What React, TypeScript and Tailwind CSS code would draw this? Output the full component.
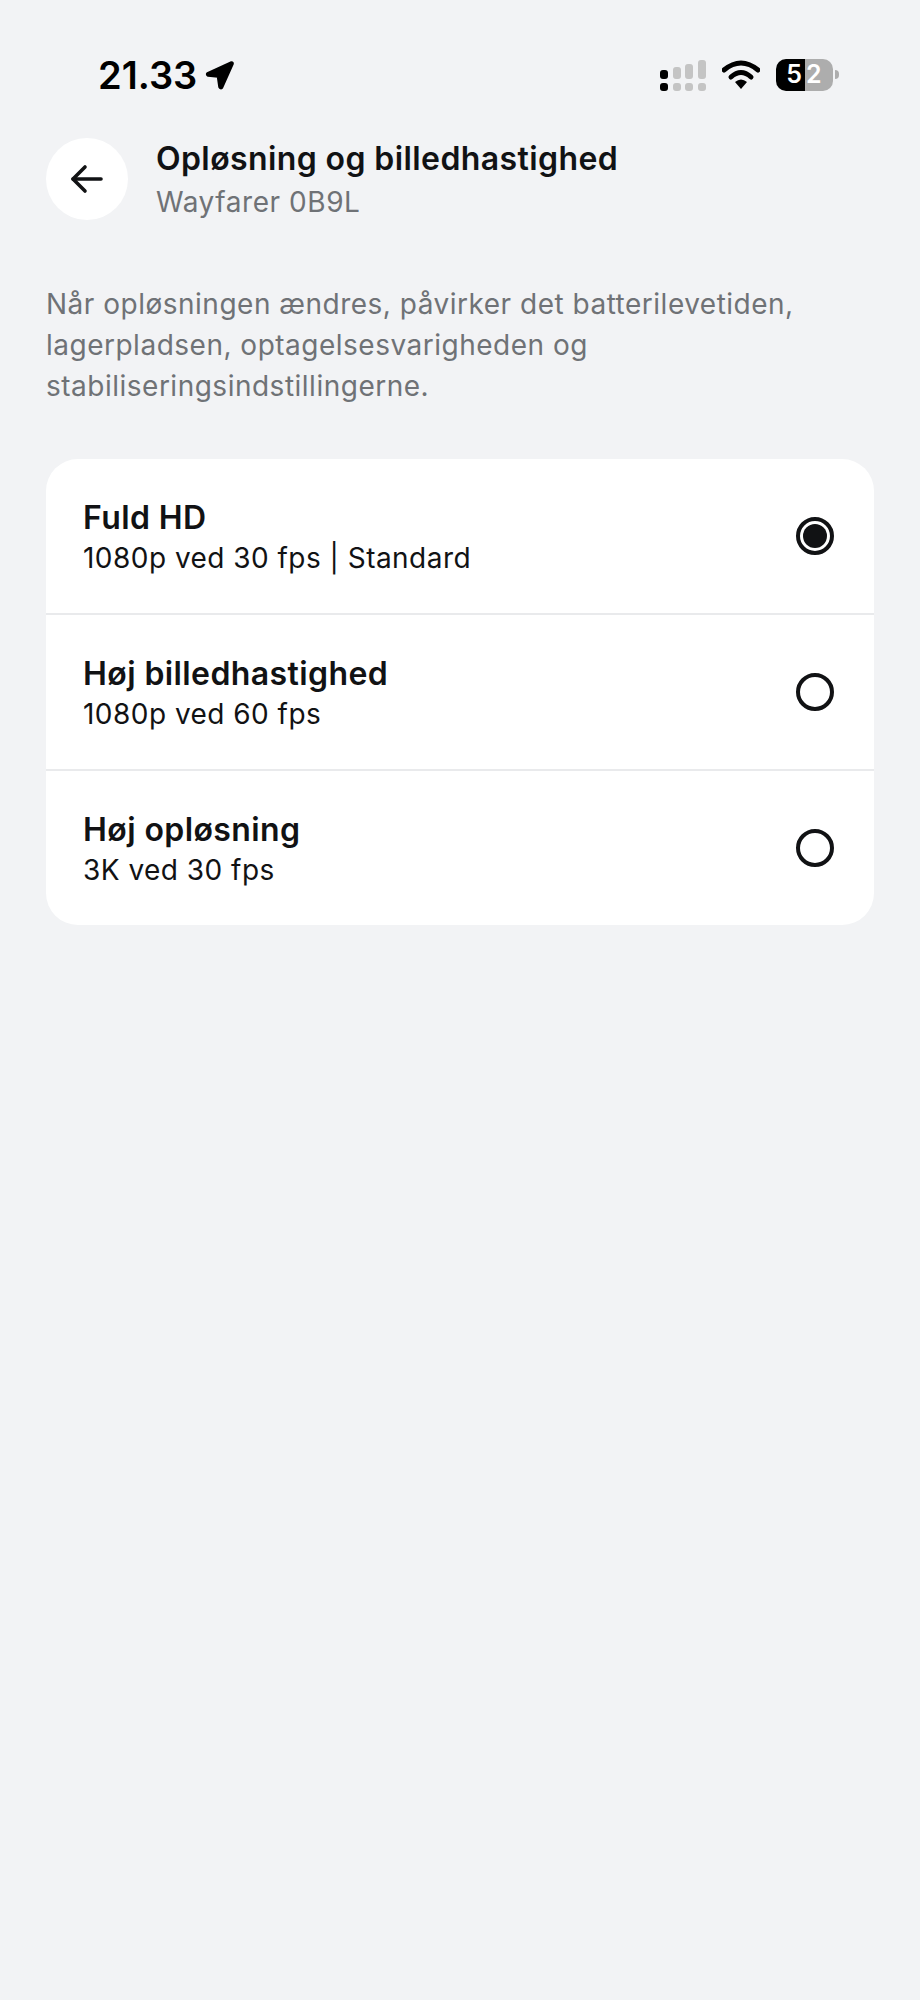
const options = [
  { title: "Fuld HD", sub: "1080p ved 30 fps | Standard", selected: true },
  { title: "Høj billedhastighed", sub: "1080p ved 60 fps", selected: false },
  { title: "Høj opløsning", sub: "3K ved 30 fps", selected: false },
];

function StatusBar() {
  return (
    <div className="flex h-[135px] items-start justify-between pl-[98px] pr-[81px] pt-[52px]">
      <div className="flex items-center gap-[8px]">
        <span className="text-[38px] font-semibold leading-[46px] text-black">21.33</span>
        <svg width="30" height="31" viewBox="0 0 30 31" className="mt-[1px]">
          <path d="M2.5 13.5 L26.5 2.5 Q28 2.5 27.5 4 L17 27.5 Q15.5 29 14.5 27 L13 16.5 L3 15.5 Q1.5 14.5 2.5 13.5 Z" fill="#000" stroke="#000" strokeWidth="2.5" strokeLinejoin="round" />
        </svg>
      </div>
      <div className="mt-[5px] flex items-center gap-[16px]">
        <svg width="46" height="32" viewBox="0 0 46 32" className="mt-[3px]">
          <rect x="0" y="10" width="8" height="9" rx="3" fill="#000" />
          <rect x="0" y="23" width="8" height="8" rx="3" fill="#000" />
          <rect x="13" y="7" width="8" height="12" rx="3" fill="#c4c4c4" />
          <rect x="13" y="23" width="8" height="8" rx="3" fill="#c4c4c4" />
          <rect x="25" y="4" width="8" height="15" rx="3" fill="#c4c4c4" />
          <rect x="25" y="23" width="8" height="8" rx="3" fill="#c4c4c4" />
          <rect x="38" y="0" width="8" height="19" rx="3" fill="#c4c4c4" />
          <rect x="38" y="23" width="8" height="8" rx="3" fill="#c4c4c4" />
        </svg>
        <svg width="38" height="30" viewBox="0 0 38 30">
          <path d="M2 10 Q19 -4 36 10" fill="none" stroke="#000" strokeWidth="5" strokeLinecap="round" />
          <path d="M9 17 Q19 8 29 17" fill="none" stroke="#000" strokeWidth="5" strokeLinecap="round" />
          <path d="M13 22 Q19 17 25 22 L19 29 Z" fill="#000" />
        </svg>
        <div className="flex items-center gap-[2px]">
          <div className="flex h-[32px] w-[57px] overflow-hidden rounded-[10px]">
            <div className="flex w-[29px] items-center justify-end bg-black pr-[3px] text-[25px] font-semibold leading-none text-white">5</div>
            <div className="flex flex-1 items-center bg-[#adadad] pl-[1px] text-[25px] font-semibold leading-none text-white">2</div>
          </div>
          <div className="h-[9px] w-[4px] rounded-r-full bg-[#adadad]" />
        </div>
      </div>
    </div>
  );
}

function Radio({ selected }: { selected: boolean }) {
  return (
    <div className="flex h-[38px] w-[38px] items-center justify-center rounded-full border-[4px] border-[#111214]">
      {selected && <div className="h-[24px] w-[24px] rounded-full bg-[#111214]" />}
    </div>
  );
}

export default function App() {
  return (
    <div className="h-[2000px] w-[920px] bg-[#f2f3f5] font-['Inter',sans-serif]">
      <StatusBar />
      <div className="flex items-center gap-[28px] px-[46px]">
        <div className="flex h-[82px] w-[82px] items-center justify-center rounded-full bg-white">
          <svg width="36" height="36" viewBox="0 0 36 36" fill="none" stroke="#111214" strokeWidth="3.6" strokeLinecap="round" strokeLinejoin="round">
            <path d="M4 18 H32" />
            <path d="M16 6 L4 18 L16 30" />
          </svg>
        </div>
        <div>
          <div className="text-[32px] font-semibold leading-[47px] tracking-[0.4px] text-[#111214]">Opløsning og billedhastighed</div>
          <div className="text-[28px] leading-[41px] tracking-[0.55px] text-[#6f7276]">Wayfarer 0B9L</div>
        </div>
      </div>
      <p className="mt-[61px] px-[46px] text-[28px] leading-[41px] tracking-[0.5px] text-[#6f7276]">
        Når opløsningen ændres, påvirker det batterilevetiden,
        <br />
        lagerpladsen, optagelsesvarigheden og
        <br />
        stabiliseringsindstillingerne.
      </p>
      <div className="mx-[46px] mt-[52px] overflow-hidden rounded-[32px] bg-white">
        {options.map((o, i) => (
          <div key={o.title} className={`flex items-center justify-between pl-[37px] pr-[40px] ${i === 0 ? "h-[154px]" : "h-[156px] border-t-[2px] border-[#e9eaec]"}`}>
            <div className="pt-[2px]">
              <div className="text-[32px] font-semibold leading-[42px] tracking-[0.4px] text-[#111214]">{o.title}</div>
              <div className="text-[28px] leading-[38px] tracking-[0.47px] text-[#111214]">{o.sub}</div>
            </div>
            <Radio selected={o.selected} />
          </div>
        ))}
      </div>
    </div>
  );
}
